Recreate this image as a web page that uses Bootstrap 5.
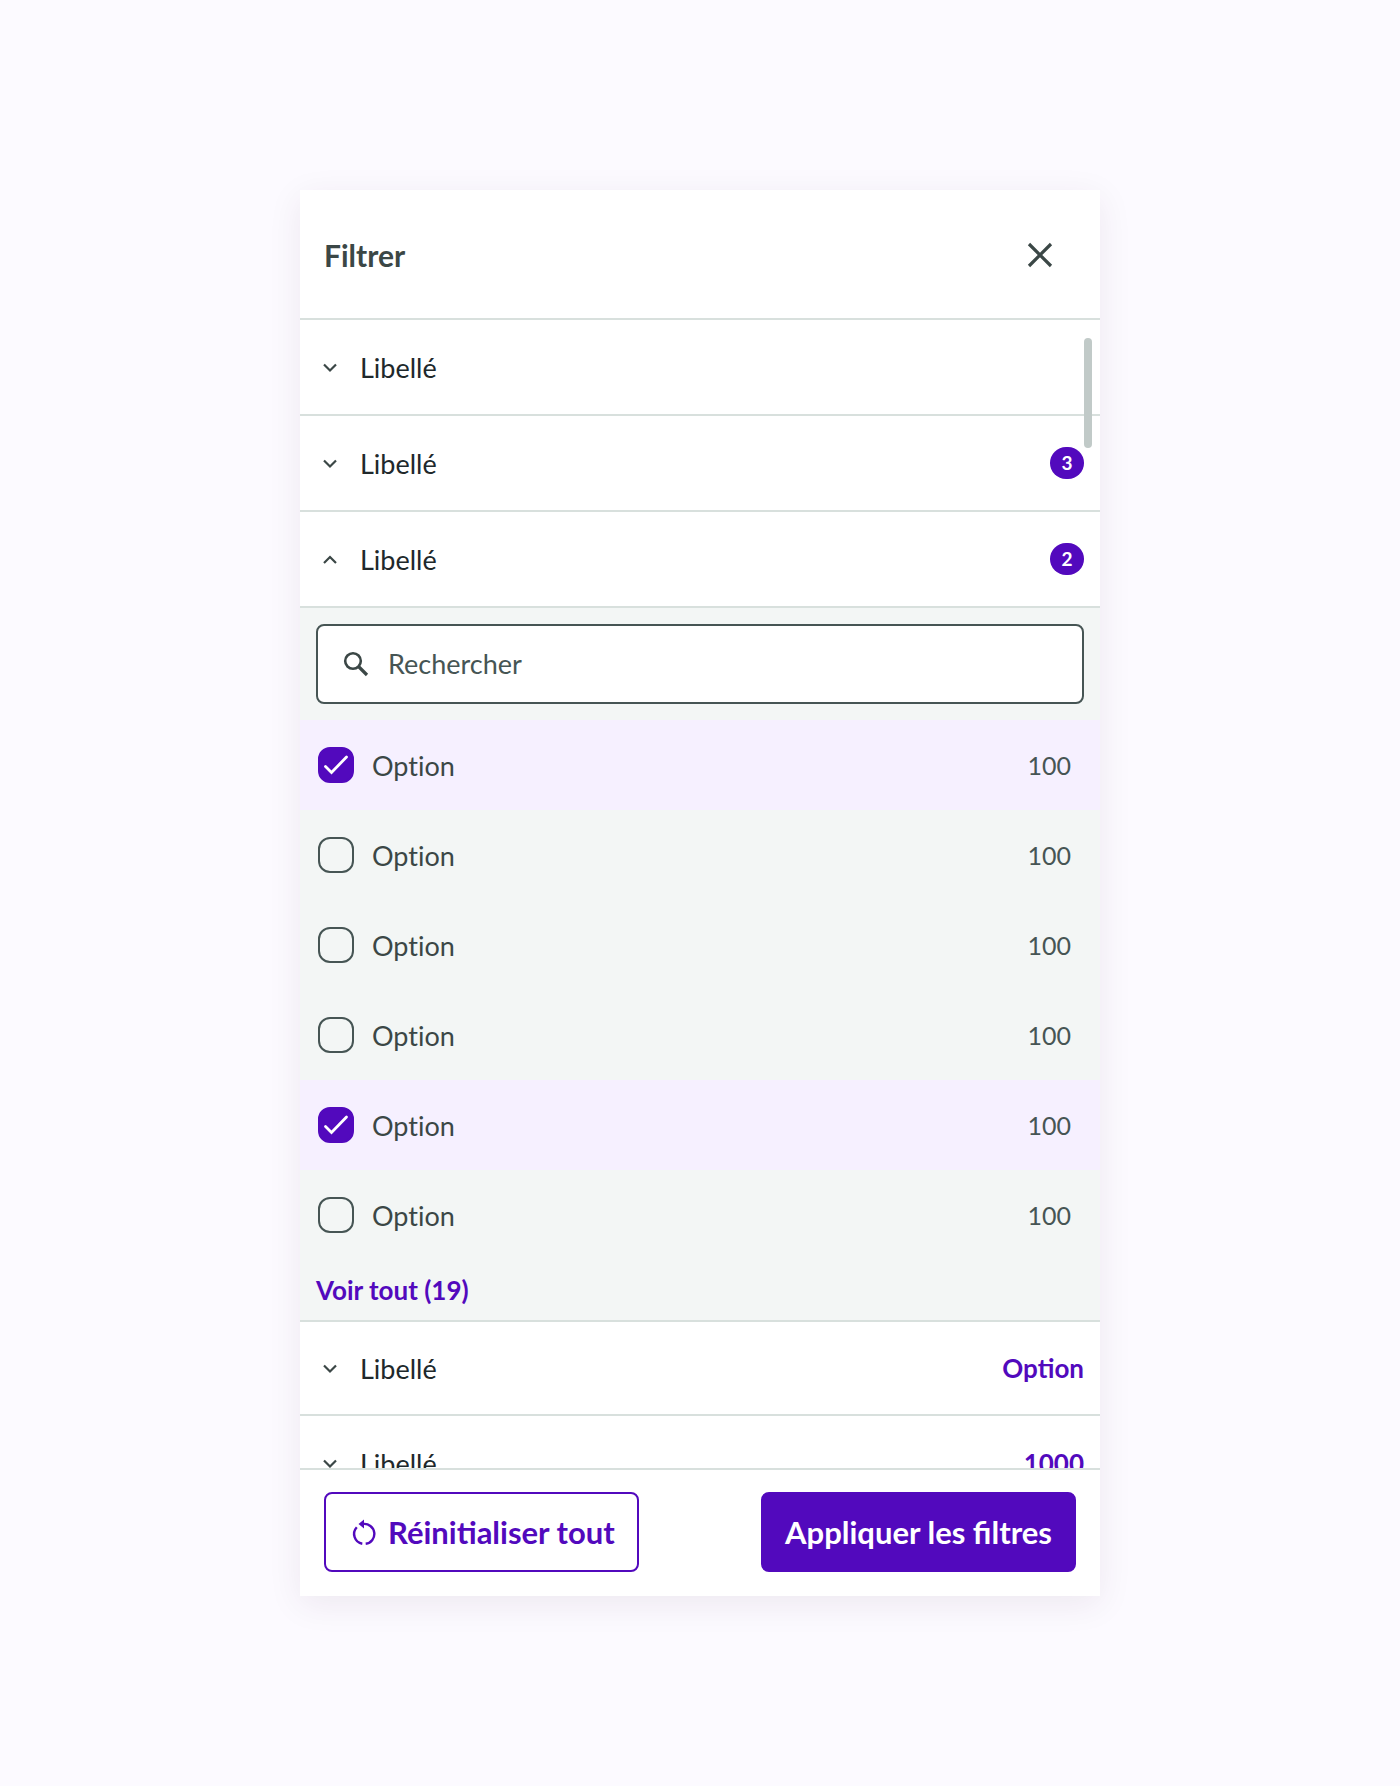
<!DOCTYPE html>
<html lang="fr">
<head>
<meta charset="utf-8">
<meta name="viewport" content="width=device-width, initial-scale=1">
<title>Filtrer</title>
<link href="https://cdn.jsdelivr.net/npm/bootstrap@5.3.0/dist/css/bootstrap.min.css" rel="stylesheet">
<style>
:root { --violet: #5209bd; --line: #d8e0dd; --ink: #3b4746; --soft: #465554; }
body { font-family: Lato, "Liberation Sans", sans-serif; font-variant-ligatures: none; background: #fcfaff; color: var(--ink); font-size: 27px; line-height: 36px; }
.stage { padding: 190px 16px; }
.filter-panel { max-width: 800px; height: calc(100vh - 380px); box-shadow: 0 8px 32px rgba(60, 30, 70, .08); }
.panel-head { height: 130px; padding: 2px 44px 0 24px; border-bottom: 2px solid var(--line); }
.panel-head h1 { font-size: 30px; line-height: 40px; font-weight: 700; }
.icon-btn { width: 32px; height: 32px; color: var(--ink); }
.list-scroll { min-height: 0; }
.list-inner { height: 100%; overflow: hidden; }
.scroll-thumb { top: 18px; right: 8px; width: 8px; height: 110px; border-radius: 4px; background: #c1cac8; }
.fold { height: 96px; padding: 0 16px; border-bottom: 2px solid var(--line); color: #20282b; text-align: left; gap: 16px; font-size: 27px; line-height: 36px; }
.fold.short { height: 94px; }
.fold svg { width: 24px; height: 24px; margin: 0 2px; color: var(--ink); }
.fold .fold-name { padding-top: 2px; }
.count-pill { width: 34px; height: 32px; border-radius: 16px; background: var(--violet); font-size: 19px; line-height: 32px; }
.violet { color: var(--violet); }
.strong-text { font-size: 26px; font-weight: 700; }
.fold-body { background: #f3f6f5; border-bottom: 2px solid var(--line); }
.search-box { height: 80px; margin: 16px 16px; border: 2px solid var(--soft); border-radius: 8px; padding: 0 22px; gap: 16px; }
.search-box .form-control { font-size: 27px; line-height: 36px; color: var(--soft); padding: 0; }
.search-box .form-control::placeholder { color: var(--soft); opacity: 1; }
.search-box .form-control:focus { box-shadow: none; }
.opt { height: 90px; padding: 0 29px 0 18px; gap: 18px; }
.opt.on { background: #f6f0ff; }
.opt .form-check-input { width: 36px; height: 36px; margin: 0; border: 2px solid var(--soft); border-radius: 12px; background-color: transparent; flex: none; }
.opt .form-check-input:checked { border-color: var(--violet); background-color: var(--violet); background-size: 36px 36px; background-image: url("data:image/svg+xml,%3Csvg xmlns='http://www.w3.org/2000/svg' viewBox='0 0 36 36'%3E%3Cpath d='M7.5 19.5l6 6 15-15.500' fill='none' stroke='%23fff' stroke-width='2.800' stroke-linecap='round' stroke-linejoin='miter'/%3E%3C/svg%3E"); }
.opt .opt-count { font-size: 25px; color: var(--soft); }
.opt label { padding-top: 2px; }
.see-all { padding: 12px 16px 12px; }
.panel-foot { border-top: 2px solid var(--line); padding: 22px 24px 24px; }
.panel-foot .btn { height: 80px; border: 2px solid var(--violet); border-radius: 8px; padding: 0 22px; font-size: 31px; line-height: 40px; font-weight: 700; }
.btn-reset { color: var(--violet); background: #fff; gap: 8px; }
.btn-apply, .btn-apply:hover { color: #fff; background: var(--violet); }
</style>
<script src="https://cdn.jsdelivr.net/npm/bootstrap@5.3.0/dist/js/bootstrap.bundle.min.js"></script>
</head>
<body>
<svg class="d-none">
  <symbol id="down" viewBox="0 0 24 24"><path d="M6 9.500l6 6 6-6" fill="none" stroke="currentColor" stroke-width="2.200"/></symbol>
  <symbol id="up" viewBox="0 0 24 24"><path d="M6 16l6-6 6 6" fill="none" stroke="currentColor" stroke-width="2.200"/></symbol>
</svg>
<main class="stage">
  <section class="filter-panel mx-auto bg-white d-flex flex-column">
    <header class="panel-head d-flex align-items-center justify-content-between flex-shrink-0">
      <h1 class="m-0">Filtrer</h1>
      <button class="icon-btn btn p-0 border-0 d-flex" type="button" aria-label="Fermer">
        <svg width="32" height="32" viewBox="0 0 32 32"><path d="M5 5l22 22M27 5L5 27" stroke="currentColor" stroke-width="3.200" fill="none"/></svg>
      </button>
    </header>
    <div class="list-scroll flex-fill position-relative">
      <div class="list-inner">
        <button type="button" class="fold btn rounded-0 border-top-0 border-start-0 border-end-0 w-100 d-flex align-items-center"><svg><use href="#down"/></svg><span class="fold-name flex-fill">Libellé</span></button>
        <button type="button" class="fold btn rounded-0 border-top-0 border-start-0 border-end-0 w-100 d-flex align-items-center"><svg><use href="#down"/></svg><span class="fold-name flex-fill">Libellé</span><span class="count-pill text-white text-center fw-bold">3</span></button>
        <button type="button" class="fold btn rounded-0 border-top-0 border-start-0 border-end-0 w-100 d-flex align-items-center" aria-expanded="true"><svg><use href="#up"/></svg><span class="fold-name flex-fill">Libellé</span><span class="count-pill text-white text-center fw-bold">2</span></button>
        <div class="fold-body d-flex flex-column">
          <div class="search-box bg-white d-flex align-items-center">
            <label for="q" class="d-flex"><svg width="32" height="32" viewBox="0 0 32 32"><g fill="none" stroke="#3b4746" stroke-width="2.600"><circle cx="13" cy="13" r="7.800"/><path d="M18.500 18.500l8.500 8.500" stroke-width="3.200"/></g></svg></label>
            <input id="q" type="text" class="form-control border-0 bg-transparent" placeholder="Rechercher" aria-label="Rechercher">
          </div>
          <div class="opt on d-flex align-items-center"><input class="form-check-input" type="checkbox" id="o1" checked><label class="flex-fill" for="o1">Option</label><span class="opt-count">100</span></div>
          <div class="opt d-flex align-items-center"><input class="form-check-input" type="checkbox" id="o2"><label class="flex-fill" for="o2">Option</label><span class="opt-count">100</span></div>
          <div class="opt d-flex align-items-center"><input class="form-check-input" type="checkbox" id="o3"><label class="flex-fill" for="o3">Option</label><span class="opt-count">100</span></div>
          <div class="opt d-flex align-items-center"><input class="form-check-input" type="checkbox" id="o4"><label class="flex-fill" for="o4">Option</label><span class="opt-count">100</span></div>
          <div class="opt on d-flex align-items-center"><input class="form-check-input" type="checkbox" id="o5" checked><label class="flex-fill" for="o5">Option</label><span class="opt-count">100</span></div>
          <div class="opt d-flex align-items-center"><input class="form-check-input" type="checkbox" id="o6"><label class="flex-fill" for="o6">Option</label><span class="opt-count">100</span></div>
          <div class="see-all"><a href="#" class="violet strong-text text-decoration-none">Voir tout (19)</a></div>
        </div>
        <button type="button" class="fold short btn rounded-0 border-top-0 border-start-0 border-end-0 w-100 d-flex align-items-center"><svg><use href="#down"/></svg><span class="fold-name flex-fill">Libellé</span><span class="violet strong-text">Option</span></button>
        <button type="button" class="fold btn rounded-0 border-top-0 border-start-0 border-end-0 w-100 d-flex align-items-center"><svg><use href="#down"/></svg><span class="fold-name flex-fill">Libellé</span><span class="violet strong-text">1000</span></button>
      </div>
      <div class="scroll-thumb position-absolute"></div>
    </div>
    <footer class="panel-foot d-flex justify-content-between flex-shrink-0 bg-white">
      <button type="button" class="btn btn-reset d-flex align-items-center">
        <svg width="32" height="32" viewBox="0 0 32 32"><g fill="none" stroke="currentColor" stroke-width="2.400"><path d="M14.300 27.800A9.900 9.900 0 0 1 8.800 11.300"/><path d="M17.700 27.800A9.900 9.900 0 0 0 15 8"/></g><path d="M10.500 8L16 3.500v9z" fill="currentColor"/></svg>
        <span>Réinitialiser tout</span>
      </button>
      <button type="button" class="btn btn-apply">Appliquer les filtres</button>
    </footer>
  </section>
</main>
</body>
</html>
